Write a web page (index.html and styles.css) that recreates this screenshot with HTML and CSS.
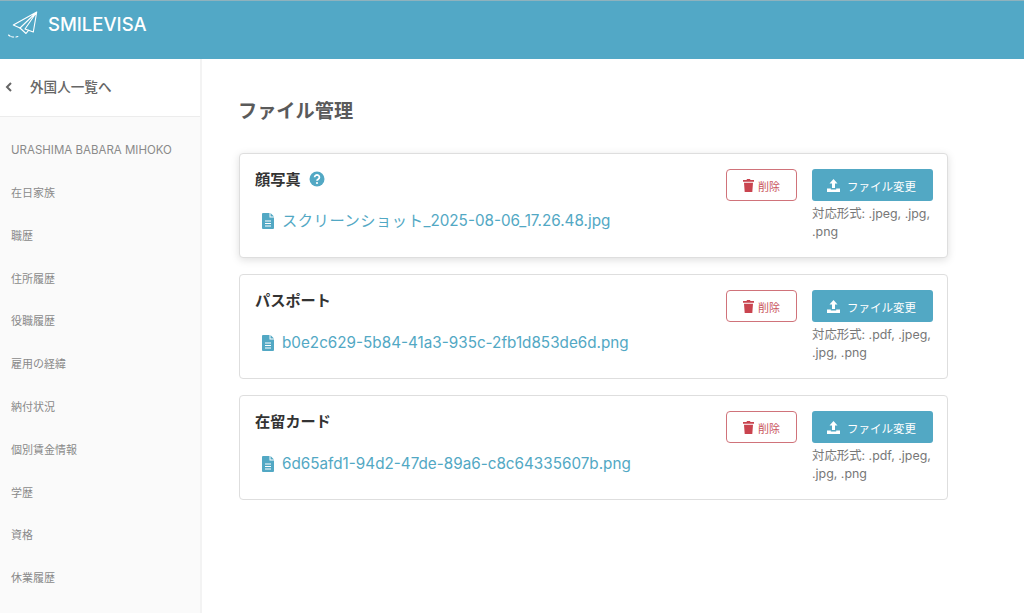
FILE: index.html
```html
<!DOCTYPE html>
<html lang="ja">
<head>
<meta charset="utf-8">
<title>SMILEVISA</title>
<link rel="stylesheet" href="styles.css">
</head>
<body>
<header class="topbar">
  <svg class="logo" width="32" height="30" viewBox="0 0 32 30" fill="none" stroke="#fff" stroke-width="1.1" stroke-linejoin="round" stroke-linecap="round">
    <path d="M28.700 2 L5.300 15 L12 18 L28.700 2 L17 19 L25.300 22 Z"/>
    <path d="M12 18 L18 23.500 L20.500 20.300"/>
    <path d="M.5 25 Q3 27 6 27 M8 27 L10 26.500" stroke-dasharray="2 1.500"/>
  </svg>
  <span class="brand">SMILEVISA</span>
</header>
<div class="layout">
  <aside class="sidebar">
    <a class="back">
      <svg class="chev" width="8" height="10" viewBox="0 0 8 10" fill="none" stroke="#666" stroke-width="2"><path d="M6 1 L2 5 L6 9"/></svg>
      <span>外国人一覧へ</span>
    </a>
    <nav class="menu">
      <a class="menu-item menu-name">URASHIMA BABARA MIHOKO</a>
      <a class="menu-item">在日家族</a>
      <a class="menu-item">職歴</a>
      <a class="menu-item">住所履歴</a>
      <a class="menu-item">役職履歴</a>
      <a class="menu-item">雇用の経緯</a>
      <a class="menu-item">納付状況</a>
      <a class="menu-item">個別賃金情報</a>
      <a class="menu-item">学歴</a>
      <a class="menu-item">資格</a>
      <a class="menu-item">休業履歴</a>
    </nav>
  </aside>
  <main class="content">
    <h1 class="title">ファイル管理</h1>
    <section class="card card-raised">
      <div class="info">
        <h2 class="card-title">顔写真
          <svg class="help" width="16" height="16" viewBox="0 0 16 16"><circle cx="8" cy="8" r="7.500" fill="#52a8c4"/><path d="M5.600 6.300a2.400 2.300 0 1 1 3.600 2c-.8.500-1.200.8-1.200 1.500" fill="none" stroke="#fff" stroke-width="1.800"/><circle cx="8" cy="12" r="1.100" fill="#fff"/></svg>
        </h2>
        <a class="file"><svg class="doc" width="12" height="16" viewBox="0 0 12 16"><path fill="#52a8c4" fill-rule="evenodd" d="M1 0h6.500v4.500H12V15a1 1 0 0 1-1 1H1a1 1 0 0 1-1-1V1a1 1 0 0 1 1-1zM8.500 0 12 3.500H8.500zM3 7.500v1h6v-1zM3 10v1h6v-1zM3 12.500v1h6v-1z"/></svg><span><span class="kana">スクリーンショット</span>_2025-08-06_17.26.48.jpg</span></a>
      </div>
      <button class="btn-del"><svg width="11" height="13" viewBox="0 0 11 13"><path fill="#c9444f" d="M4 0h3l.5 1H11v1.800H0V1h3.500zM1 3.800h9L9.300 13H1.700z"/></svg><span class="btn-label">削除</span></button>
      <div class="change">
        <button class="btn-up"><svg width="13" height="13" viewBox="0 0 13 13"><path fill="#fff" d="M6.500 0 10.500 4.500H8V9H5V4.500H2.500zM0 9.500h3.800v1h5.400v-1H13V13H0z"/></svg><span class="btn-label">ファイル変更</span></button>
        <p class="formats">対応形式: .jpeg, .jpg, .png</p>
      </div>
    </section>
    <section class="card">
      <div class="info">
        <h2 class="card-title">パスポート</h2>
        <a class="file"><svg class="doc" width="12" height="16" viewBox="0 0 12 16"><path fill="#52a8c4" fill-rule="evenodd" d="M1 0h6.500v4.500H12V15a1 1 0 0 1-1 1H1a1 1 0 0 1-1-1V1a1 1 0 0 1 1-1zM8.500 0 12 3.500H8.500zM3 7.500v1h6v-1zM3 10v1h6v-1zM3 12.500v1h6v-1z"/></svg>b0e2c629-5b84-41a3-935c-2fb1d853de6d.png</a>
      </div>
      <button class="btn-del"><svg width="11" height="13" viewBox="0 0 11 13"><path fill="#c9444f" d="M4 0h3l.5 1H11v1.800H0V1h3.500zM1 3.800h9L9.300 13H1.700z"/></svg><span class="btn-label">削除</span></button>
      <div class="change">
        <button class="btn-up"><svg width="13" height="13" viewBox="0 0 13 13"><path fill="#fff" d="M6.500 0 10.500 4.500H8V9H5V4.500H2.500zM0 9.500h3.800v1h5.400v-1H13V13H0z"/></svg><span class="btn-label">ファイル変更</span></button>
        <p class="formats">対応形式: .pdf, .jpeg, .jpg, .png</p>
      </div>
    </section>
    <section class="card">
      <div class="info">
        <h2 class="card-title">在留カード</h2>
        <a class="file"><svg class="doc" width="12" height="16" viewBox="0 0 12 16"><path fill="#52a8c4" fill-rule="evenodd" d="M1 0h6.500v4.500H12V15a1 1 0 0 1-1 1H1a1 1 0 0 1-1-1V1a1 1 0 0 1 1-1zM8.500 0 12 3.500H8.500zM3 7.500v1h6v-1zM3 10v1h6v-1zM3 12.500v1h6v-1z"/></svg>6d65afd1-94d2-47de-89a6-c8c64335607b.png</a>
      </div>
      <button class="btn-del"><svg width="11" height="13" viewBox="0 0 11 13"><path fill="#c9444f" d="M4 0h3l.5 1H11v1.800H0V1h3.500zM1 3.800h9L9.300 13H1.700z"/></svg><span class="btn-label">削除</span></button>
      <div class="change">
        <button class="btn-up"><svg width="13" height="13" viewBox="0 0 13 13"><path fill="#fff" d="M6.500 0 10.500 4.500H8V9H5V4.500H2.500zM0 9.500h3.800v1h5.400v-1H13V13H0z"/></svg><span class="btn-label">ファイル変更</span></button>
        <p class="formats">対応形式: .pdf, .jpeg, .jpg, .png</p>
      </div>
    </section>
  </main>
</div>
</body>
</html>
```
FILE: styles.css
```css
* { box-sizing: border-box; }
html, body { margin: 0; height: 613px; overflow: hidden; }
body {
  background: #fff;
  font-family: Inter, "Noto Sans CJK JP", sans-serif;
  color: #4a4a4a;
}
.topbar {
  height: 59px;
  background: #52a8c6;
  border-top: 1px solid #8fb2bd;
  display: flex;
  align-items: flex-start;
  padding: 9px 0 0 8px;
  color: #fff;
}
.logo { flex: none; }
.brand { font-size: 18.500px; font-weight: 500; line-height: 28px; margin: 0 0 0 8px; }
.layout { display: flex; height: 554px; }
.sidebar {
  width: 202px;
  flex: none;
  background: #fafafa;
  border-right: 2px solid #f3f3f3;
  overflow: hidden;
}
.back {
  height: 58px;
  background: #fff;
  border-bottom: 1px solid #ececec;
  display: flex;
  align-items: center;
  padding: 0 0 1px 5px;
  font-size: 13.600px;
  font-weight: 500;
  color: #666;
}
.chev { margin-right: 17px; }
.back span { margin-top: -3px; }
.menu { display: flex; flex-direction: column; padding-top: 12px; }
.menu-item {
  height: 42.800px;
  line-height: 42.800px;
  padding-left: 11px;
  font-size: 11px;
  color: #8a8a8a;
}
.menu-name { font-size: 11.500px; height: 43px; line-height: 43px; }
.content { flex: 1; padding: 39px 0 0 36px; }
.title { margin: 0 0 29px; font-size: 19.200px; line-height: 26px; font-weight: 700; color: #5a5a5a; }
.card {
  width: 709px;
  height: 105px;
  margin-bottom: 16px;
  margin-left: 1px;
  background: #fff;
  border: 1px solid #dedede;
  border-radius: 4px;
  padding: 15px 14px 0 15px;
  display: flex;
  align-items: flex-start;
}
.card-raised { box-shadow: 0 2px 8px rgba(0,0,0,.13); }
.info { flex: 1; margin-top: -3px; }
.card-title {
  margin: 0;
  height: 24px;
  display: flex;
  align-items: center;
  gap: 8px;
  font-size: 15.200px;
  font-weight: 700;
  color: #333;
}
.help { margin-top: 2px; }
.file {
  display: flex;
  align-items: center;
  margin: 20px 0 0 7px;
  font-size: 15.250px;
  line-height: 24px;
  color: #52a8c4;
}
.card-raised .file { margin-top: 19px; }
.kana { letter-spacing: .55px; }
.doc { margin-right: 8px; flex: none; }
.btn-del {
  width: 71px;
  height: 32px;
  margin-right: 15px;
  background: #fff;
  border: 1px solid #d0737a;
  border-radius: 4px;
  color: #c9545c;
  font: 11px Inter, "Noto Sans CJK JP", sans-serif;
  display: flex;
  align-items: center;
  justify-content: center;
  gap: 4px;
  padding: 0;
}
.btn-label { margin-top: 2px; }
.change { width: 121px; }
.btn-up {
  width: 121px;
  height: 32px;
  background: #52a8c4;
  border: 0;
  border-radius: 3px;
  color: #fff;
  font: 11.500px Inter, "Noto Sans CJK JP", sans-serif;
  display: flex;
  align-items: center;
  justify-content: center;
  gap: 7px;
  padding: 0 2px 0 0;
}
.formats { margin: 3.500px 0 0; font-size: 12.400px; line-height: 18.600px; color: #777; }
```
